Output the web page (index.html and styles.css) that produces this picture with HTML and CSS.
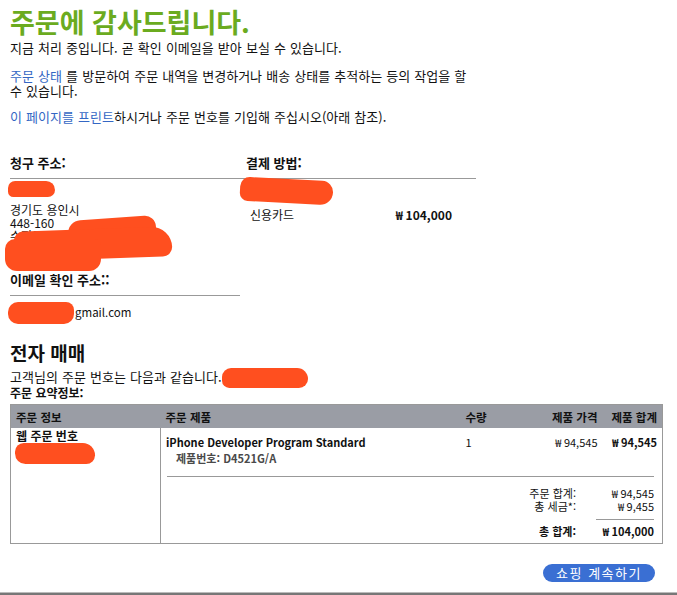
FILE: index.html
```html
<!DOCTYPE html>
<html lang="ko">
<head>
<meta charset="utf-8">
<title>주문에 감사드립니다.</title>
<link rel="stylesheet" href="styles.css">
</head>
<body>
<div class="page">
  <h1 class="title">주문에 감사드립니다.</h1>
  <p class="text">지금 처리 중입니다. 곧 확인 이메일을 받아 보실 수 있습니다.</p>
  <p class="text para p1"><a class="link" href="#">주문 상태</a> 를 방문하여 주문 내역을 변경하거나 배송 상태를 추적하는 등의 작업을 할 수 있습니다.</p>
  <p class="text para p2"><a class="link" href="#">이 페이지를 프린트</a>하시거나 주문 번호를 기입해 주십시오(아래 참조).</p>

  <div class="info">
    <div class="col col-left">
      <div class="head">청구 주소:</div>
      <div class="body addr">
        <span class="blob blob-name"></span>
        <div class="line">경기도 용인시</div>
        <div class="line">448-160</div>
        <div class="line">수지구</div>
        <span class="blob blob-bump"></span>
        <span class="blob blob-addr1"></span>
        <span class="blob blob-addr2"></span>
      </div>
      <div class="head">이메일 확인 주소::</div>
      <div class="body email">
        <span class="blob blob-email"></span>
        <span class="email-text">gmail.com</span>
      </div>
    </div>
    <div class="col col-right">
      <div class="head">결제 방법:</div>
      <div class="body pay">
        <span class="blob blob-pay"></span>
        <div class="pay-row"><span>신용카드</span><span class="bold">₩ 104,000</span></div>
      </div>
    </div>
  </div>

  <h2 class="sub">전자 매매</h2>
  <p class="text order-no">고객님의 주문 번호는 다음과 같습니다.<span class="blob blob-order"></span></p>
  <div class="summary">주문 요약정보:</div>

  <table class="order">
    <colgroup>
      <col class="c1"><col class="c2"><col class="c3"><col class="c4"><col class="c5">
    </colgroup>
    <thead>
      <tr>
        <th class="l">주문 정보</th>
        <th class="l">주문 제품</th>
        <th class="l">수량</th>
        <th class="r">제품 가격</th>
        <th class="r">제품 합계</th>
      </tr>
    </thead>
    <tbody>
      <tr>
        <td class="web" rowspan="2"><div class="bold">웹 주문 번호</div><span class="blob blob-web"></span></td>
        <td class="prod"><div class="bold">iPhone Developer Program Standard</div><div class="pn">제품번호: D4521G/A</div></td>
        <td class="qty">1</td>
        <td class="price">₩ 94,545</td>
        <td class="price bold">₩ 94,545</td>
      </tr>
      <tr>
        <td class="totals-cell" colspan="4">
          <div class="rule"></div>
          <div class="totals">
            <span class="tl">주문 합계:</span><span class="tv">₩ 94,545</span>
            <span class="tl">총 세금*:</span><span class="tv">₩ 9,455</span>
            <span class="tl"></span><span class="tv sep"></span>
            <span class="tl bold">총 합계:</span><span class="tv bold">₩ 104,000</span>
          </div>
        </td>
      </tr>
    </tbody>
  </table>

  <div class="actions"><a class="btn" href="#">쇼핑 계속하기</a></div>
</div>
<div class="bottom-bar"></div>
</body>
</html>
```
FILE: styles.css
```css
html, body {
  margin: 0;
  padding: 0;
  background: #fff;
}
body {
  font-family: "Noto Sans CJK KR", "Noto Sans", sans-serif;
  font-size: 13px;
  color: #111;
  height: 595px;
  overflow: hidden;
  position: relative;
}
.page {
  padding: 4px 0 0 10px;
}
.title {
  margin: 0;
  font-size: 27px;
  line-height: 36px;
  color: #6bab1f;
  font-weight: bold;
}
.text {
  margin: 0;
  line-height: 15px;
  word-spacing: 0.5px;
}
.para {
  width: 470px;
}
.p1 {
  margin-top: 13px;
}
.p2 {
  margin-top: 11px;
}
.link {
  color: #3467c4;
  text-decoration: none;
}
.info {
  display: grid;
  grid-template-columns: 230px 236px;
  margin-top: 31px;
}
.head {
  font-weight: bold;
  line-height: 15px;
  padding-bottom: 8px;
  border-bottom: 1px solid #999;
}
.col-right .head {
  padding-left: 6px;
}
.body {
  position: relative;
}
.addr {
  box-sizing: border-box;
  padding-top: 24px;
  height: 93px;
  font-size: 12px;
}
.line {
  line-height: 13px;
}
.email {
  padding-top: 9px;
  line-height: 15px;
  font-size: 11.5px;
}
.email-text {
  padding-left: 65px;
}
.pay {
  padding-top: 28px;
  font-size: 12px;
}
.pay-row {
  display: flex;
  justify-content: space-between;
  padding-left: 10px;
  width: 202px;
  line-height: 15px;
}
.bold {
  font-weight: bold;
}
.blob {
  position: absolute;
  background: #ff4f1f;
  display: block;
}
.blob-name {
  left: -2px;
  top: 2px;
  width: 47px;
  height: 16px;
  border-radius: 8px 10px 8px 6px;
}
.blob-bump {
  left: 58px;
  top: 39px;
  width: 88px;
  height: 22px;
  border-radius: 14px 12px 6px 10px;
  transform: rotate(-4deg);
}
.blob-addr1 {
  left: 4px;
  top: 50px;
  width: 158px;
  height: 30px;
  border-radius: 14px 30px 14px 8px;
  transform: rotate(-2deg);
}
.blob-addr2 {
  left: -5px;
  top: 60px;
  width: 96px;
  height: 32px;
  border-radius: 10px 6px 12px 12px;
}
.blob-email {
  left: -2px;
  top: 6px;
  width: 66px;
  height: 22px;
  border-radius: 10px 8px 10px 10px;
}
.blob-pay {
  left: 0;
  top: 0;
  width: 93px;
  height: 24px;
  border-radius: 12px 14px 16px 10px;
  transform: rotate(3deg);
}
.sub {
  margin: 21px 0 0;
  font-size: 19px;
  line-height: 24px;
  font-weight: bold;
}
.order-no {
  position: relative;
  margin-top: 4px;
}
.blob-order {
  display: inline-block;
  position: relative;
  vertical-align: middle;
  width: 86px;
  height: 20px;
  margin: -4px 0 -4px 0;
  border-radius: 10px 12px 10px 8px;
}
.summary {
  font-weight: bold;
  line-height: 16px;
  font-size: 12px;
  margin-top: 1px;
}
.order {
  margin-top: 3px;
  width: 652px;
  table-layout: fixed;
  border-collapse: collapse;
  border: 1px solid #999;
  font-size: 11px;
}
.c1 { width: 150px; }
.c2 { width: 300px; }
.c3 { width: 60px; }
.c4 { width: 82px; }
.c5 { width: 60px; }
.order th {
  background: #9a9da5;
  color: #111;
  font-weight: bold;
  height: 23px;
  padding: 0 5px;
  font-size: 11.5px;
}
.order th.l { text-align: left; }
.order th.r { text-align: right; }
.order td {
  vertical-align: top;
  padding: 0 5px;
  line-height: 14px;
}
.order td.web {
  border-right: 1px solid #999;
  padding-top: 1px;
  position: relative;
  font-size: 12px;
}
.blob-web {
  left: 4px;
  top: 15px;
  width: 80px;
  height: 21px;
  border-radius: 10px 14px 10px 12px;
}
.order td.prod {
  padding-top: 6px;
  line-height: 16px;
}
.pn {
  padding-left: 10px;
  color: #4a4a4a;
  font-weight: bold;
}
.order td.qty, .order td.price {
  padding-top: 6px;
  line-height: 16px;
}
.price {
  text-align: right;
}
.order td.totals-cell {
  padding: 0 8px 5px 6px;
}
.rule {
  margin-top: 10px;
  border-top: 1px solid #999;
}
.totals {
  display: grid;
  grid-template-columns: 1fr 58px;
  column-gap: 20px;
  margin-top: 10px;
  line-height: 13px;
}
.tl {
  text-align: right;
}
.tv {
  text-align: right;
}
.tv.sep {
  border-top: 1px solid #999;
  height: 0;
  margin: 6px 0 5px;
}
.actions {
  display: flex;
  justify-content: flex-end;
  width: 645px;
  margin-top: 20px;
}
.btn {
  display: inline-block;
  background: #3a6fd3;
  color: #fff;
  text-decoration: none;
  font-size: 13px;
  line-height: 18px;
  padding: 0 13px;
  border-radius: 10px;
  letter-spacing: 1.5px;
}
.bottom-bar {
  position: absolute;
  left: 0;
  right: 0;
  top: 592px;
  height: 3px;
  background: #777;
  border-top: 1px solid #bbb;
}
```
